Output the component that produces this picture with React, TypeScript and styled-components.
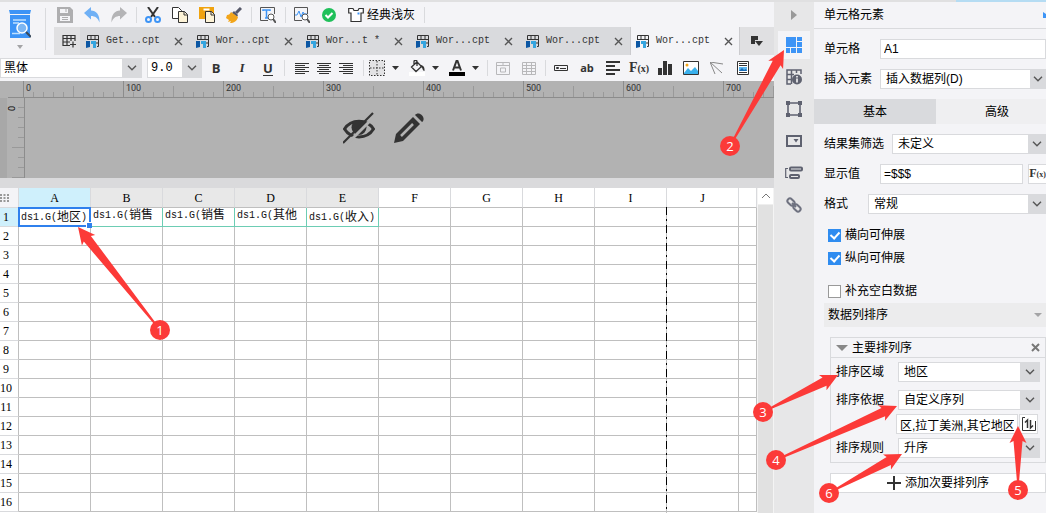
import React from "react";
import styled, { createGlobalStyle } from "styled-components";

const ink = "#333333";
const line = "#d9dadd";
const surface = "#f4f4f7";
const blue = "#3d94f6";
const sans = `"Liberation Sans", "Noto Sans CJK SC", sans-serif`;
const mono = `"Liberation Mono", "Noto Sans CJK SC", monospace`;

const Global = createGlobalStyle`
  * { box-sizing: border-box; }
  body { margin: 0; background: ${surface}; color: #000; font: 12px/18px ${sans}; }
  button, input, select { font: inherit; color: inherit; margin: 0; }
  button { border: 0; padding: 0; background: none; display: flex; align-items: center; justify-content: center; }
  svg { display: block; flex: none; }
`;

/* ---------- shell ---------- */
const Page = styled.div`
  position: relative;
  height: 100vh;
  overflow: hidden;
  display: flex;
  flex-direction: column;
`;
const TopStrip = styled.div`
  flex: none;
  height: 2px;
  background: linear-gradient(to left, #b5dcf3 90px, #e0e0e1 90px);
`;
const Columns = styled.div`
  flex: 1;
  min-height: 0;
  display: flex;
`;
const Main = styled.main`
  flex: 1;
  min-width: 0;
  display: flex;
  flex-direction: column;
  overflow: hidden;
`;

/* ---------- toolbars ---------- */
const Header = styled.header`
  flex: none;
  display: flex;
  height: 53px;
`;
const Brand = styled.button`
  width: 46px;
  flex: none;
  margin: 6px 8px 5px 0;
  border-right: 1px solid ${line};
  flex-direction: column;
  gap: 6px;
  padding-right: 6px;
`;
const HeaderRows = styled.div`
  flex: 1;
  min-width: 0;
`;
const Tools = styled.div`
  height: 25px;
  display: flex;
  align-items: center;
  gap: 11px;
  padding-left: 3px;
`;
const ToolButton = styled.button`
  gap: 3px;
  height: 20px;
`;
const ToolSep = styled.span`
  width: 1px;
  height: 16px;
  margin: 0 -3px 0 -2px;
  background: ${line};
`;
const TabBar = styled.div`
  height: 28px;
  display: flex;
  background: #e0e0e2;
`;
const NewTab = styled.button`
  width: 26px;
  flex: none;
  padding-left: 4px;
`;
const FileTab = styled.div<{ $active?: boolean }>`
  width: 110px;
  flex: none;
  display: flex;
  align-items: center;
  padding-left: 6px;
  background: ${(p) => (p.$active ? surface : line)};
  box-shadow: ${(p) => (p.$active ? "inset 1px 0 #cbcbce, inset -1px 0 #cbcbce" : "none")};
`;
const FileName = styled.button`
  flex: 1;
  gap: 6px;
  justify-content: flex-start;
  white-space: nowrap;
  font: 10px/18px ${mono};
  color: ${ink};
`;
const CloseTab = styled.button`
  width: 20px;
  height: 20px;
  margin-right: 2px;
`;
const TabMenu = styled.button`
  width: 34px;
`;

const FormatBar = styled.div`
  flex: none;
  height: 26px;
  display: flex;
  align-items: center;
`;
const FormatButton = styled.button<{ $w?: number }>`
  width: ${(p) => p.$w ?? 26}px;
  height: 22px;
  flex: none;
`;
const FormatSep = styled.span`
  width: 1px;
  height: 16px;
  flex: none;
  margin: 0 2px 0 3px;
  background: ${line};
`;
const Group = styled.div<{ $pad?: string; $gap?: number }>`
  display: flex;
  align-items: center;
  gap: ${(p) => p.$gap ?? 0}px;
  padding: ${(p) => p.$pad ?? "0"};
`;
const Glyph = styled.span<{ $italic?: boolean; $underline?: boolean }>`
  font: ${(p) => (p.$italic ? `italic bold 13px/16px "Liberation Serif", serif` : `bold 13px/14px "Open Sans", sans-serif`)};
  color: ${ink};
  border-bottom: ${(p) => (p.$underline ? `1px solid ${ink}` : "0")};
`;
const SmallGlyph = styled.span`
  font: bold 11px/16px "Open Sans", sans-serif;
  color: ${ink};
`;
const Fx = styled.span<{ $compact?: boolean }>`
  font: bold ${(p) => (p.$compact ? 12 : 14)}px/18px "Liberation Serif", serif;
  color: ${ink};
  small { font-size: ${(p) => (p.$compact ? 8 : 10)}px; }
`;

/* ---------- form controls ---------- */
const SelectBox = styled.span<{ $w?: number; $arrow?: number; $mono?: boolean }>`
  display: grid;
  grid-template-columns: 1fr ${(p) => p.$arrow ?? 18}px;
  flex: ${(p) => (p.$w ? `0 0 ${p.$w}px` : "1")};
  min-width: 0;
  height: 20px;
  select {
    grid-area: 1 / 1 / 2 / 3;
    appearance: none;
    min-width: 0;
    border: 1px solid ${line};
    border-radius: 0;
    background: #fff;
    padding: 0 20px 0 ${(p) => (p.$w ? 3 : 5)}px;
    font-family: ${(p) => (p.$mono ? mono : sans)};
  }
  span {
    grid-area: 1 / 2 / 2 / 3;
    display: flex;
    align-items: center;
    justify-content: center;
    background: ${line};
    pointer-events: none;
  }
`;
const TextInput = styled.input<{ $w?: number }>`
  flex: ${(p) => (p.$w ? `0 0 ${p.$w}px` : "1")};
  min-width: 0;
  height: 20px;
  border: 1px solid ${line};
  background: #fff;
  padding: 0 3px;
`;

/* ---------- design canvas ---------- */
const HRuler = styled.div`
  flex: none;
  height: 17px;
  display: flex;
  padding-left: 24px;
  background-color: #b2b2b2;
  background-image: linear-gradient(#8c8c8c, #8c8c8c),
    repeating-linear-gradient(to right, #8c8c8c 0 1px, transparent 1px 100px),
    repeating-linear-gradient(to right, #999999 0 1px, transparent 1px 50px),
    repeating-linear-gradient(to right, #999999 0 1px, transparent 1px 10px);
  background-position: 8px 16px, 23px 0, 23px 5px, 23px 11px;
  background-size: 100% 1px, 100% 16px, 100% 11px, 100% 5px;
  background-repeat: no-repeat;
  overflow: hidden;
  span {
    flex: 0 0 100px;
    padding-left: 2px;
    font: 9px/14px Roboto, sans-serif;
    color: #333;
  }
`;
const Canvas = styled.div`
  flex: none;
  height: 80px;
  display: flex;
  background: #b2b2b2;
`;
const VRuler = styled.div`
  width: 25px;
  flex: none;
  padding: 0 7px;
  border-right: 1px solid #8c8c8c;
  background-color: #b2b2b2;
  background-image: linear-gradient(#a8a8a8, #a8a8a8),
    repeating-linear-gradient(#999999 0 1px, transparent 1px 50px),
    repeating-linear-gradient(#999999 0 1px, transparent 1px 10px);
  background-position: 0 0, 12px -1px, 18px -1px;
  background-size: 7px 100%, 12px 100%, 6px 100%;
  background-repeat: no-repeat, repeat-y, repeat-y;
  span {
    writing-mode: vertical-rl;
    transform: rotate(180deg);
    font: 9px/11px Roboto, sans-serif;
  }
`;
const CanvasTools = styled.div`
  flex: 1;
  display: flex;
  align-items: flex-start;
  justify-content: center;
  gap: 18px;
  padding: 14px 32px 0 0;
`;
const Divider = styled.div`
  flex: none;
  height: 10px;
  background: #dadadc;
`;

/* ---------- sheet ---------- */
const SheetArea = styled.div`
  flex: 1;
  min-height: 0;
  display: flex;
  background: #fff;
`;
const SheetScroll = styled.div`
  position: relative;
  flex: 1;
  min-width: 0;
  overflow: hidden;
`;
const Sheet = styled.table`
  width: 100%;
  table-layout: fixed;
  border-collapse: separate;
  border-spacing: 0;
  th, td {
    padding: 0;
    height: 19px;
    border: 0 solid #bfbfbf;
    border-width: 0 1px 1px 0;
    overflow: hidden;
  }
`;
const ColHead = styled.th<{ $state?: "active" | "used" }>`
  && { height: 20px; border-right-color: ${line}; }
  font: 12px/18px "Liberation Serif", serif;
  background: ${(p) => (p.$state === "active" ? "#cff0fc" : p.$state === "used" ? "#e8e8e8" : "#fff")};
`;
const Corner = styled.th`
  && { height: 20px; border-color: ${line}; }
  background: ${surface};
`;
const RowHead = styled.th<{ $active?: boolean }>`
  && { border-bottom-color: ${line}; }
  font: 12px/18px "Liberation Serif", serif;
  text-align: center;
  background: ${(p) => (p.$active ? "#cff0fc" : "#fff")};
  span { display: block; width: 12px; }
`;
const Cell = styled.td<{ $bound?: boolean }>`
  && { border-color: ${(p) => (p.$bound ? "#6dcdb4" : "#bfbfbf")}; }
`;
const Formula = styled.div<{ $top?: boolean }>`
  display: flex;
  height: 18px;
  padding-left: 2px;
  white-space: nowrap;
  line-height: ${(p) => (p.$top ? 15 : 19)}px;
  color: #111;
  i { font-family: ${mono}; font-size: 10px; font-style: normal; }
`;
const PageEdge = styled.div`
  position: absolute;
  left: 666px;
  top: 19px;
  bottom: 0;
  width: 1px;
  background: repeating-linear-gradient(#000 0 8px, #bfbfbf 8px 12px, #000 12px 14px, #bfbfbf 14px 18px);
`;
const Selection = styled.div`
  position: absolute;
  left: 18px;
  top: 19px;
  width: 73px;
  height: 20px;
  border: 2px solid #2f80ed;
  &::after {
    content: "";
    position: absolute;
    right: -3px;
    bottom: -3px;
    width: 5px;
    height: 5px;
    background: #2f80ed;
    box-shadow: -1px -1px 0 #fff;
  }
`;
const Scrollbar = styled.div`
  width: 17px;
  flex: none;
  background: #e1e1e1;
  border: solid #f4f4f4;
  border-width: 0 1px;
  button { width: 15px; height: 17px; background: #fff; border-bottom: 1px solid #eee; }
`;

/* ---------- side rail and panel ---------- */
const Rail = styled.nav`
  width: 40px;
  flex: none;
  background: #e7e7e8;
  display: flex;
  flex-direction: column;
  align-items: center;
  gap: 4px;
`;
const RailButton = styled.button<{ $active?: boolean }>`
  width: 32px;
  height: 28px;
  background: ${(p) => (p.$active ? surface : "transparent")};
`;
const RailToggle = styled.button`
  height: 25px;
  width: 32px;
`;
const Panel = styled.aside`
  width: 232px;
  flex: none;
  overflow: hidden;
  background: ${surface};
`;
const PanelTitle = styled.div`
  height: 27px;
  display: flex;
  align-items: center;
  justify-content: space-between;
  padding-left: 10px;
  border-bottom: 1px solid ${line};
  margin-bottom: 10px;
  h2 { font: 12px/18px ${sans}; margin: 0; }
`;
const Field = styled.div<{ $label: number }>`
  display: flex;
  align-items: center;
  margin-bottom: 10px;
  padding-left: 10px;
  label { flex: 0 0 ${(p) => p.$label}px; }
`;
const FxButton = styled.button`
  flex: 0 0 18px;
  height: 20px;
  margin: 0 0 0 5px;
  border: 1px solid ${line};
  border-right: 0;
  background: #fff;
`;
const PanelTabs = styled.div`
  display: flex;
  height: 25px;
  margin-bottom: 10px;
  background: #efeff1;
`;
const PanelTab = styled.button<{ $active?: boolean }>`
  flex: 0 0 122px;
  background: ${(p) => (p.$active ? line : "transparent")};
`;
const Checks = styled.div`
  padding: 2px 0 3px 14px;
`;
const Check = styled.label<{ $after?: number }>`
  display: flex;
  align-items: center;
  gap: 4px;
  height: 18px;
  margin-bottom: ${(p) => p.$after ?? 0}px;
  input {
    appearance: none;
    width: 13px;
    height: 13px;
    border: 1px solid #999;
    background: #fff;
    display: grid;
    place-items: center;
  }
  input:checked { border-color: #2f8cf0; background: #2f8cf0; }
  input:checked::before {
    content: "";
    width: 4px;
    height: 7px;
    margin-bottom: 2px;
    border: solid #fff;
    border-width: 0 2px 2px 0;
    transform: rotate(42deg);
  }
`;
const Section = styled.button`
  width: calc(100% - 10px);
  height: 24px;
  margin: 0 0 10px 10px;
  padding: 0 4px;
  justify-content: space-between;
  background: #ececed;
`;
const SortGroup = styled.section`
  margin: 0 0 10px 16px;
  height: 126px;
  border: 1px solid ${line};
`;
const SortHead = styled.div`
  display: flex;
  align-items: center;
  height: 20px;
  gap: 4px;
  padding: 0 5px;
  border-bottom: 1px solid ${line};
  margin-bottom: 4px;
  h3 { flex: 1; font: 12px/18px ${sans}; margin: 0; }
`;
const SortRow = styled.div<{ $after?: number }>`
  display: flex;
  align-items: center;
  justify-content: flex-end;
  padding: 0 5px;
  margin-bottom: ${(p) => p.$after ?? 4}px;
  label { flex: 0 0 62px; }
`;
const OrderButton = styled.button`
  width: 19px;
  height: 20px;
  margin: 0 2px 0 1px;
  border: 1px solid ${line};
  background: #fff;
`;
const AddButton = styled.button`
  width: calc(100% - 16px);
  height: 20px;
  margin-left: 16px;
  gap: 4px;
  border: 1px solid ${line};
  background: #fff;
`;

/* ---------- annotations ---------- */
const Marks = styled.svg`
  position: absolute;
  inset: 0;
  width: 100%;
  height: 100%;
  pointer-events: none;
  fill: #fc3a38;
  text { fill: #fff; font: 13px "Open Sans", sans-serif; text-anchor: middle; }
`;

/* ---------- icons ---------- */
const Svg = ({ w = 16, h = 16, children }: { w?: number; h?: number; children: React.ReactNode }) => (
  <svg width={w} height={h} viewBox={`0 0 ${w} ${h}`} fill="none" stroke={ink} aria-hidden="true">{children}</svg>
);
const Chevron = () => <Svg w={10} h={6}><path d="M1 .8l4 4 4-4" stroke="#555" strokeWidth="1.4" /></Svg>;
const Caret = ({ color = ink, w = 7 }: { color?: string; w?: number }) => (
  <Svg w={w} h={4}><path d={`M0 0h${w}l-${w / 2} 4z`} fill={color} stroke="none" /></Svg>
);
const Cross = ({ w = 9, s = 1.4 }: { w?: number; s?: number }) => (
  <Svg w={w} h={w}><path d={`M1 1l${w - 2} ${w - 2}M${w - 1} 1l-${w - 2} ${w - 2}`} stroke={s > 1.5 ? "#777" : "#555"} strokeWidth={s} /></Svg>
);
const SheetIcon = () => (
  <Svg w={14} h={15}>
    <path d="M1.500 6V1.500h11v11H11M5 1v5M9 1v5M1 5.500h12M10 9h3" />
    <path d="M0 7h4v6l-4 1z" fill="#0b57a4" stroke="none" />
    <path d="M5 7h5v7H7v-4H5z" fill="#35a5df" stroke="none" />
  </Svg>
);
const Align = ({ kind }: { kind: "l" | "c" | "r" }) => {
  const x = kind === "l" ? 0 : kind === "c" ? 2 : 4;
  return <Svg w={14} h={12}><path d={`M0 1.5h14M${x} 3.5h10M0 5.5h14M${x} 7.5h10M0 9.5h14M${x} 11.5h10`} /></Svg>;
};

const tools: Record<string, React.ReactNode> = {
  保存: <Svg><path d="M0 0h13l3 3v13H0z" fill="#aeaeb0" stroke="none" /><path d="M3 2h8v4H3zM3 9h10v5H3z" fill={surface} stroke="none" /><path d="M9 2v3M5 10.500h6M5 12.500h6" stroke="#aeaeb0" /></Svg>,
  撤销: <Svg><path d="M0 6l7-6v3.500c5 0 9 4 8.500 12C14 11 11 9 7 9v3.500z" fill="#6fb0f5" stroke="none" /></Svg>,
  重做: <Svg><path d="M16 6L9 0v3.500C4 3.500 0 7.500.5 15.500 2 11 5 9 9 9v3.500z" fill="#b4b4b6" stroke="none" /></Svg>,
  剪切: <Svg><path d="M3 0l7 10M13 0L6 10" strokeWidth="2" /><circle cx="3.500" cy="12.500" r="2.500" stroke={blue} strokeWidth="2" /><circle cx="12.500" cy="12.500" r="2.500" stroke={blue} strokeWidth="2" /></Svg>,
  复制: <Svg><path d="M.5 .5h6l3 3v8h-9z" fill="#fff" /><path d="M6.500 4.500h6l3 3v8h-9z" fill="#fdf3d7" /><path d="M12 4.500v3.500h3.500" /></Svg>,
  粘贴: <Svg><path d="M0 0h15v12H0z" fill="#f0a30f" stroke="none" /><path d="M4.500 1.500h6v2h-6z" fill="#fff" stroke="none" /><path d="M6.500 4.500h6l3 3v8h-9z" fill="#fdf3d7" /><path d="M12 4.500v3.500h3.500" /></Svg>,
  格式刷: <Svg><path d="M15 1l-5 5" stroke="#56596a" strokeWidth="3" /><path d="M8 4l4 4-1 2-5-4z" fill="#56596a" stroke="none" /><path d="M5 5l7 5c-1 4-4 6-8 6l1-2-3 1 1-2-3-2 1-3c2 0 3-1 4-3z" fill="#f2a51a" stroke="none" /></Svg>,
};
const Lens = ({ x = 11, y = 10 }) => (
  <><circle cx={x} cy={y} r="3" fill="#fff" stroke="#555" /><path d={`M${x + 2} ${y + 2}l3 4`} stroke="#555" strokeWidth="2" /></>
);

const formatTools: [string, React.ReactNode][] = [
  ["控件", <Svg w={14} h={6}><path d="M.5 .5h13v5H.5zM2.500 2.500h2v1h-2zM6 3.500h6" /></Svg>],
  ["文本", <SmallGlyph>ab</SmallGlyph>],
  ["富文本", <Svg w={14} h={14}><path d="M0 1h14M0 5h9M0 9h14M0 13h9" strokeWidth="2" /></Svg>],
  ["公式", <Fx>F<small>(x)</small></Fx>],
  ["图表", <Svg w={14} h={14}><path d="M0 7h4v7H0zM5 0h4v14H5zM10 3h4v11h-4z" fill={ink} stroke="none" /></Svg>],
  ["图片", <Svg w={16} h={14}><path d="M.5 .5h15v13H.5z" fill="#fff" /><path d="M1 12l4-5 3 3 4-4 3 4v3H1z" fill="#39b0ec" stroke="none" /><circle cx="4" cy="4" r="1.500" fill="#f2a51a" stroke="none" /></Svg>],
  ["斜线", <Svg w={14} h={13}><path d="M0 0l13 2M0 0l12 11M0 0l5 12" stroke="#888" /></Svg>],
  ["报表", <Svg w={12} h={14}><path d="M.5 .5h11v13H.5z" fill="#fff" /><path d="M2 2.500h8M2 4.500h8M2 11.500h8" /><path d="M2 6h8v4H2z" fill="#5bb5f0" stroke="none" /><path d="M2 10l3-3 2 2 2-1 1 2z" fill="#1769b5" stroke="none" /></Svg>],
];

const railIcons: [string, React.ReactNode][] = [
  ["单元格元素", <Svg><path d="M0 0h10v10H0zM11 0h5v4h-5zM11 5h5v5h-5zM0 11h4v5H0zM5 11h5v5H5zM11 11h5v5h-5z" fill={blue} stroke="none" /></Svg>],
  ["单元格属性", <Svg><path d="M5 15H1V1h14v4M1 5.500h7M5.500 1v14M10.500 1v3M1 10.500h4" stroke="#5f6270" strokeWidth="1.500" /><circle cx="11" cy="10.500" r="5" fill="#5f6270" stroke="none" /><path d="M11 9.500v4M11 7v1.500" stroke="#fff" strokeWidth="1.500" /></Svg>],
  ["悬浮元素", <Svg><path d="M2 2h12v12H2z" stroke="#5f6270" strokeWidth="1.600" /><path d="M0 0h4v4H0zM12 0h4v4h-4zM0 12h4v4H0zM12 12h4v4h-4z" fill="#5f6270" stroke="none" /></Svg>],
  ["控件设置", <Svg h={12}><path d="M1 1h14v10H1z" stroke="#5f6270" strokeWidth="2" /><path d="M7.500 4h5L10 7.500z" fill="#5f6270" stroke="none" /></Svg>],
  ["条件属性", <Svg w={18} h={14}><path d="M3 2.500H.7v9H3" stroke="#5f6270" strokeWidth="1.200" /><rect x="5" y="1.500" width="12" height="3" rx="1" stroke="#5f6270" strokeWidth="2" /><rect x="5" y="9" width="9" height="3" rx="1" stroke="#5f6270" strokeWidth="2" /></Svg>],
  ["超级链接", <Svg><g stroke="#6f7280" strokeWidth="2"><rect x="-4" y="-2.500" width="8" height="5" rx="2.500" transform="translate(5 5) rotate(45)" /><rect x="-4" y="-2.500" width="8" height="5" rx="2.500" transform="translate(11 11) rotate(45)" /><path d="M6 6l4 4" /></g></Svg>],
];

type SelectProps = { id: string; value: string; w?: number; arrow?: number; label?: string; monospace?: boolean };
function Select({ id, value, w, arrow, label, monospace }: SelectProps) {
  return (
    <SelectBox $w={w} $arrow={arrow} $mono={monospace}>
      <select id={id} aria-label={label}><option>{value}</option></select>
      <span><Chevron /></span>
    </SelectBox>
  );
}

const files = ["Get...cpt", "Wor...cpt", "Wor...t *", "Wor...cpt", "Wor...cpt", "Wor...cpt"];
const columns = ["A", "B", "C", "D", "E", "F", "G", "H", "I", "J", ""];
const bound = [["地区", ")"], ["销售", ""], ["销售", ""], ["其他", ""], ["收入", ")"]];
const marks = [
  { n: 1, x: 160, y: 330, tx: 78, ty: 227 },
  { n: 2, x: 730, y: 146, tx: 784, ty: 50 },
  { n: 3, x: 763, y: 412, tx: 838, ty: 375 },
  { n: 4, x: 776, y: 460, tx: 897, ty: 406 },
  { n: 5, x: 1018, y: 490, tx: 1018, ty: 426 },
  { n: 6, x: 829, y: 493, tx: 902, ty: 454 },
];

function Mark({ n, x, y, tx, ty }: (typeof marks)[number]) {
  const d = Math.hypot(tx - x, ty - y);
  const angle = (Math.atan2(ty - y, tx - x) * 180) / Math.PI;
  return (
    <g>
      <path
        transform={`translate(${x} ${y}) rotate(${angle})`}
        d={`M8 -1L${d - 15} -4.500L${d - 17} -8.500L${d} 0L${d - 17} 8.500L${d - 15} 4.500L8 1z`}
      />
      <circle cx={x} cy={y} r="10" />
      <text x={x} y={y + 5}>{n}</text>
    </g>
  );
}

export default function App() {
  return (
    <Page>
      <Global />
      <TopStrip />
      <Columns>
        <Main>
          <Header>
            <Brand aria-label="预览">
              <Svg w={22} h={29}>
                <path d="M0 0h22l-1 4H1zM1 5h20v23H1z" fill={blue} stroke="none" />
                <path d="M4 10h13M4 13h6" stroke="#bfe0ff" strokeWidth="1.500" />
                <circle cx="13" cy="18" r="5" fill="#7db6f2" stroke="#fff" strokeWidth="1.500" />
                <path d="M17 22l5 5" stroke="#3a4a5c" strokeWidth="2" /><path d="M3 23.500h8" stroke="#bfe0ff" strokeWidth="1.500" />
              </Svg>
              <Caret color="#a4a4a6" w={6} />
            </Brand>
            <HeaderRows>
              <Tools>
                {Object.entries(tools).map(([name, icon], i) => (
                  <React.Fragment key={name}>
                    {i === 3 && <ToolSep />}
                    <ToolButton aria-label={name}>{icon}</ToolButton>
                  </React.Fragment>
                ))}
                <ToolSep />
                <ToolButton aria-label="查找"><Svg><path d="M8 13.500H.5V.5h14V7" stroke="#555" /><path d="M3 4V3h7v1M6.500 3v8M5 11h3" stroke={blue} strokeWidth="1.500" /><Lens /></Svg></ToolButton>
                <ToolSep />
                <ToolButton aria-label="性能检测"><Svg><path d="M8 13.500H.5V.5h13V7" stroke="#555" /><path d="M1 8h2l2-4 2 6 2-5 1 2h3" stroke={blue} /><Lens /></Svg></ToolButton>
                <ToolButton aria-label="校验"><Svg><circle cx="8" cy="8" r="7" fill="#1fc05a" stroke="none" /><path d="M4.500 8l2.500 2.500L11.500 6" stroke="#fff" strokeWidth="2" /></Svg></ToolButton>
                <ToolButton>
                  <Svg><path d="M.7 1.500H5l1 2h4l1-2h4.300V6H13v8.500H3V6H.7z" strokeWidth="1.200" fill="#fff" /><path d="M9.500 5.500h2v2h-2z" fill={blue} stroke="none" /></Svg>
                  经典浅灰
                </ToolButton>
                <ToolSep />
              </Tools>
              <TabBar>
                <NewTab aria-label="新建"><Svg w={15} h={14}><path d="M8 11.500H1V1.500h12V7M1 4.500h12M5 1v10M9 1v6M1 8h7M8 10.500h6M11 7.500v6" strokeWidth="1.200" /></Svg></NewTab>
                {files.map((name, i) => (
                  <FileTab key={i} $active={i === 5}>
                    <FileName><SheetIcon />{name}</FileName>
                    <CloseTab aria-label="关闭"><Cross /></CloseTab>
                  </FileTab>
                ))}
                <TabMenu aria-label="更多"><Svg w={12} h={10}><path d="M0 0h7v4H4v4H0z" fill={ink} stroke="none" /><path d="M4 5h8L8 10z" fill={ink} stroke="none" /></Svg></TabMenu>
              </TabBar>
            </HeaderRows>
          </Header>

          <FormatBar>
            <Group $gap={5} $pad="0 1px 0 0">
              <Select id="font" label="字体" value="黑体" w={142} arrow={20} />
              <Select id="size" label="字号" value="9.0" w={55} arrow={20} monospace />
            </Group>
            <FormatButton aria-label="加粗"><Glyph>B</Glyph></FormatButton>
            <FormatButton aria-label="倾斜"><Glyph $italic>I</Glyph></FormatButton>
            <FormatButton aria-label="下划线"><Glyph $underline>U</Glyph></FormatButton>
            <FormatSep />
            <Group $pad="0 3px 0 4px">
              <FormatButton $w={22} aria-label="左对齐"><Align kind="l" /></FormatButton>
              <FormatButton $w={22} aria-label="居中"><Align kind="c" /></FormatButton>
              <FormatButton $w={22} aria-label="右对齐"><Align kind="r" /></FormatButton>
            </Group>
            <FormatSep />
            <Group $gap={4} $pad="0 2px 0 0">
              <Group>
                <FormatButton $w={22} aria-label="边框"><Svg><path d="M.5 .5h15v15H.5zM8 1v14M1 8h14" fill="#e2e2e4" strokeDasharray="1.500 1.500" /></Svg></FormatButton>
                <FormatButton $w={14} aria-label="边框样式"><Caret /></FormatButton>
              </Group>
              <Group>
                <FormatButton $w={22} aria-label="填充色"><Svg><path d="M0 12h16v4H0z" fill="#fff" stroke="none" /><path d="M2.500 7L8 2l4.500 4.500L7 11.500zM5 4V1.500c0-1.500 3-1.500 3 0V6" strokeWidth="1.300" /><path d="M11 5c3 0 5 2 4.500 6-2 0-1.500-3-3.500-4z" fill={ink} stroke="none" /></Svg></FormatButton>
                <FormatButton $w={14} aria-label="填充样式"><Caret /></FormatButton>
              </Group>
              <Group>
                <FormatButton $w={22} aria-label="文字颜色"><Svg><path d="M0 12h16v4H0z" fill="#000" stroke="none" /><path d="M4 10.500L7.500 1h1L12 10.500M5.500 7.500h5" strokeWidth="2" /></Svg></FormatButton>
                <FormatButton $w={14} aria-label="颜色样式"><Caret /></FormatButton>
              </Group>
            </Group>
            <FormatSep />
            <FormatButton aria-label="合并"><Svg w={14} h={13}><path d="M.5 .5h13v12H.5zM1 3.500h12M7 .5v3M4.500 6h5v4h-5z" stroke="#b8b8ba" /></Svg></FormatButton>
            <FormatButton aria-label="取消合并"><Svg w={14} h={13}><path d="M.5 .5h13v12H.5zM1 3.500h12M1 6.500h12M1 9.500h12M4.500 1v12M9.500 1v12" stroke="#b8b8ba" /></Svg></FormatButton>
            <FormatSep />
            {formatTools.map(([name, icon]) => <FormatButton key={name} aria-label={name}>{icon}</FormatButton>)}
          </FormatBar>

          <HRuler>{[0, 100, 200, 300, 400, 500, 600, 700].map((n) => <span key={n}>{n}</span>)}</HRuler>
          <Canvas>
            <VRuler><span>0</span></VRuler>
            <CanvasTools>
              <button aria-label="隐藏">
                <Svg w={32} h={32}>
                  <path d="M1.500 17C8 6.500 24 6.500 30.500 17 24 27.500 8 27.500 1.500 17z" strokeWidth="3" />
                  <circle cx="16" cy="15.500" r="7.500" fill={ink} stroke="none" />
                  <path d="M3 33L33 3" stroke="#b2b2b2" strokeWidth="3" /><path d="M0 31L30 1" strokeWidth="2.200" />
                </Svg>
              </button>
              <button aria-label="编辑">
                <Svg w={32} h={32}>
                  <path d="M1 31l2-9L20 5l7 7-17 17z" fill={ink} stroke="none" /><path d="M22 3c4-5 12 3 7 7z" fill={ink} stroke="none" />
                  <path d="M8 24L20 12" stroke="#b2b2b2" strokeWidth="2.500" />
                </Svg>
              </button>
            </CanvasTools>
          </Canvas>
          <Divider />

          <SheetArea>
            <SheetScroll>
              <Sheet>
                <colgroup>
                  <col style={{ width: 19 }} />
                  {columns.map((c, i) => <col key={i} style={c ? { width: 72 } : undefined} />)}
                </colgroup>
                <thead>
                  <tr>
                    <Corner>
                      <Svg w={9} h={8}><path d="M0 1h9M0 4h9M0 7h9" stroke="#999" strokeWidth="2" strokeDasharray="2 1.500" /></Svg>
                    </Corner>
                    {columns.map((c, i) => <ColHead key={i} $state={i === 0 ? "active" : i < 5 ? "used" : undefined}>{c}</ColHead>)}
                  </tr>
                </thead>
                <tbody>
                  {Array.from({ length: 16 }, (_, r) => (
                    <tr key={r}>
                      <RowHead $active={r === 0}><span>{r + 1}</span></RowHead>
                      {columns.map((_, c) => (
                        <Cell key={c} $bound={r === 0 && c < 5}>
                          {r === 0 && bound[c] && (
                            <Formula $top={!bound[c][1]}><i>ds1.G(</i>{bound[c][0]}<i>{bound[c][1]}</i></Formula>
                          )}
                        </Cell>
                      ))}
                    </tr>
                  ))}
                </tbody>
              </Sheet>
              <PageEdge />
              <Selection />
            </SheetScroll>
            <Scrollbar><button aria-label="向上滚动"><Svg w={10} h={6}><path d="M1 5l4-4 4 4" stroke="#777" /></Svg></button></Scrollbar>
          </SheetArea>
        </Main>

        <Rail>
          <RailToggle aria-label="收起"><Svg w={6} h={10}><path d="M0 0l6 5-6 5z" fill="#999" stroke="none" /></Svg></RailToggle>
          {railIcons.map(([name, icon], i) => <RailButton key={name} $active={i === 0} aria-label={name}>{icon}</RailButton>)}
        </Rail>

        <Panel>
          <PanelTitle>
            <h2>单元格元素</h2>
            <Svg w={3} h={6}><path d="M0 0l3 2v4H0z" fill={blue} stroke="none" /></Svg>
          </PanelTitle>
          <Field $label={56}><label htmlFor="cell">单元格</label><TextInput id="cell" defaultValue="A1" /></Field>
          <Field $label={56}><label htmlFor="insert">插入元素</label><Select id="insert" value="插入数据列(D)" arrow={16} /></Field>
          <PanelTabs role="tablist">
            <PanelTab role="tab" aria-selected="true" $active>基本</PanelTab>
            <PanelTab role="tab" aria-selected="false">高级</PanelTab>
          </PanelTabs>
          <Field $label={68}><label htmlFor="filter">结果集筛选</label><Select id="filter" value="未定义" /></Field>
          <Field $label={56}>
            <label htmlFor="display">显示值</label><TextInput id="display" defaultValue="=$$$" />
            <FxButton aria-label="编辑公式"><Fx $compact>F<small>(x)</small></Fx></FxButton>
          </Field>
          <Field $label={44}><label htmlFor="format">格式</label><Select id="format" value="常规" /></Field>
          <Checks>
            <Check $after={5}><input type="checkbox" defaultChecked />横向可伸展</Check>
            <Check $after={15}><input type="checkbox" defaultChecked />纵向可伸展</Check>
            <Check><input type="checkbox" />补充空白数据</Check>
          </Checks>
          <Section>数据列排序<Caret color="#a4a4a6" w={8} /></Section>
          <SortGroup>
            <SortHead>
              <Svg w={12} h={6}><path d="M0 0h12L6 6z" fill="#888" stroke="none" /></Svg>
              <h3>主要排列序</h3>
              <button aria-label="删除"><Cross s={2} /></button>
            </SortHead>
            <SortRow $after={8}><label htmlFor="area">排序区域</label><Select id="area" value="地区" arrow={20} /></SortRow>
            <SortRow><label htmlFor="basis">排序依据</label><Select id="basis" value="自定义序列" arrow={20} /></SortRow>
            <SortRow>
              <TextInput $w={122} aria-label="序列" defaultValue="区,拉丁美洲,其它地区" />
              <OrderButton aria-label="自定义顺序"><Svg w={14} h={14}><path d="M3 .5H.5v13h13V4" /><path d="M5.500 11V3L3 5.500M8.500 3v8l2.500-2.500" strokeWidth="1.500" /></Svg></OrderButton>
            </SortRow>
            <SortRow><label htmlFor="rule">排序规则</label><Select id="rule" value="升序" arrow={20} /></SortRow>
          </SortGroup>
          <AddButton><Svg w={14} h={14}><path d="M7 0v14M0 7h14" strokeWidth="2" /></Svg>添加次要排列序</AddButton>
        </Panel>
      </Columns>
      <Marks aria-hidden="true">{marks.map((m) => <Mark key={m.n} {...m} />)}</Marks>
    </Page>
  );
}
